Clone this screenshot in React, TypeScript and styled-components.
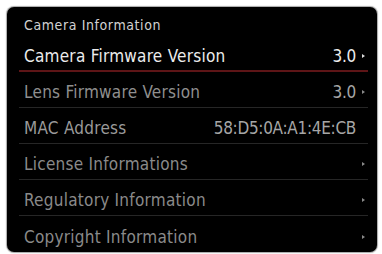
import React from "react";
import styled, { createGlobalStyle } from "styled-components";

const Global = createGlobalStyle`
  html, body { margin: 0; padding: 0; background: #ffffff; }
  body { width: 382px; height: 254px; overflow: hidden; }
`;

const Panel = styled.div`
  margin: 7px 0 0 7px;
  width: 370px;
  height: 245px;
  background: #000;
  border-radius: 7px;
  box-shadow: 0 0 1px 1px rgba(0,0,0,0.35);
  display: flex;
  flex-direction: column;
  font-family: "DejaVu Sans Condensed", "DejaVu Sans", sans-serif;
  overflow: hidden;
`;

const Header = styled.div`
  height: 30px;
  display: flex;
  align-items: center;
  padding: 5px 0 0 17px;
  box-sizing: border-box;
  font-size: 14px;
  letter-spacing: 0.6px;
  color: #d2d2d2;
`;

const List = styled.div`
  display: flex;
  flex-direction: column;
  padding: 0 9px 0 12px;
`;

const Row = styled.div<{ $active?: boolean; $last?: boolean }>`
  height: ${(p) => (p.$active ? 35 : 36)}px;
  box-sizing: border-box;
  display: flex;
  align-items: center;
  padding: 5px 3px 0 5px;
  border-bottom: ${(p) =>
    p.$last ? "none" : p.$active ? "2px solid #5e1517" : "1px solid #262626"};
  font-size: 17px;
  color: ${(p) => (p.$active ? "#ececec" : "#8f8f8f")};
`;

const Label = styled.span<{ $tone: string }>`
  flex: 1;
  white-space: nowrap;
  letter-spacing: 0.25px;
  color: ${(p) => p.$tone};
`;

const Value = styled.span<{ $active?: boolean }>`
  color: ${(p) => (p.$active ? "#ececec" : "#a6a6a6")};
  letter-spacing: -0.3px;
`;

const Arrow = styled.span<{ $active?: boolean }>`
  width: 0;
  height: 0;
  margin-left: 5px;
  border-top: 2.5px solid transparent;
  border-bottom: 2.5px solid transparent;
  border-left: 3.5px solid ${(p) => (p.$active ? "#dcdcdc" : "#8a8a8a")};
`;

const ArrowSlot = styled.span`
  width: 9px;
  display: flex;
  justify-content: flex-end;
`;

type Item = { label: string; value?: string; arrow: boolean; tone: string };

const items: Item[] = [
  { label: "Camera Firmware Version", value: "3.0", arrow: true, tone: "#ececec" },
  { label: "Lens Firmware Version", value: "3.0", arrow: true, tone: "#8f8f8f" },
  { label: "MAC Address", value: "58:D5:0A:A1:4E:CB", arrow: false, tone: "#9a9a9a" },
  { label: "License Informations", arrow: true, tone: "#8a8a8a" },
  { label: "Regulatory Information", arrow: true, tone: "#8a8a8a" },
  { label: "Copyright Information", arrow: true, tone: "#8a8a8a" },
];

export default function App() {
  return (
    <>
      <Global />
      <Panel>
        <Header>Camera Information</Header>
        <List>
          {items.map((it, i) => {
            const active = i === 0;
            return (
              <Row key={it.label} $active={active} $last={i === items.length - 1}>
                <Label $tone={it.tone}>{it.label}</Label>
                {it.value && <Value $active={active}>{it.value}</Value>}
                <ArrowSlot>{it.arrow && <Arrow $active={active} />}</ArrowSlot>
              </Row>
            );
          })}
        </List>
      </Panel>
    </>
  );
}
